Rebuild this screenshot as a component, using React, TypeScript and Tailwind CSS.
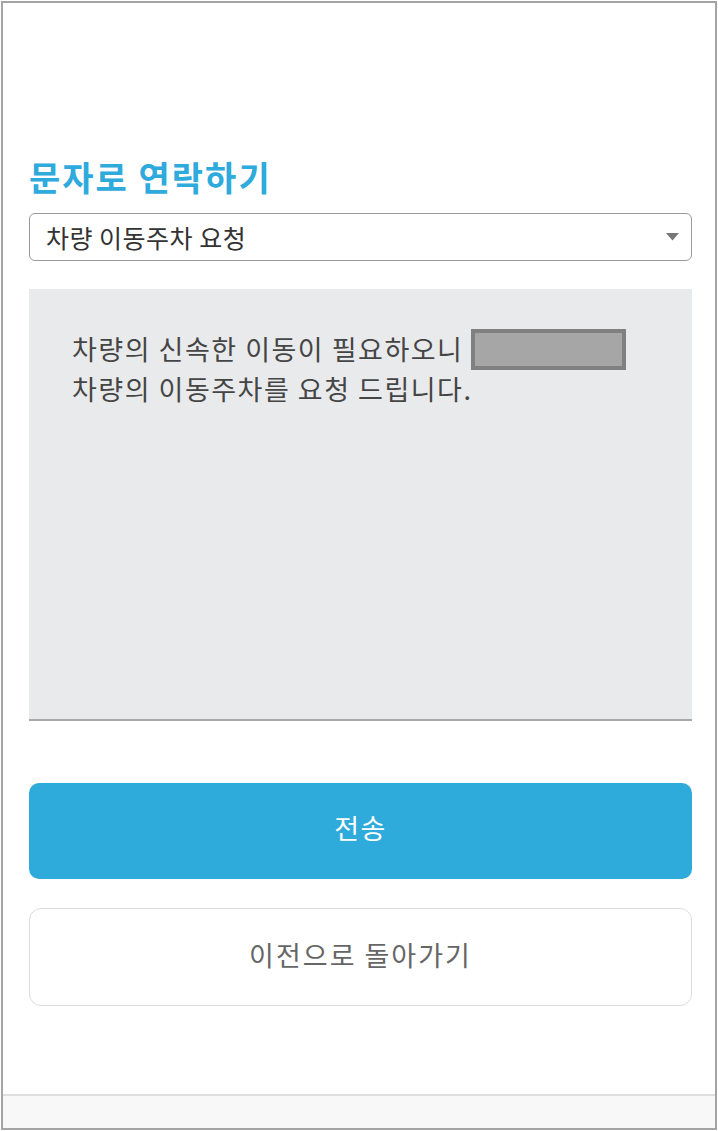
import React from "react";

const font = { fontFamily: '"Noto Sans CJK KR", "Noto Sans", sans-serif' };

function ChevronDown() {
  return (
    <svg width="13" height="8" viewBox="0 0 13 8" className="shrink-0">
      <polygon points="0,0 13,0 6.5,7.5" fill="#777777" />
    </svg>
  );
}

export default function App() {
  return (
    <div className="w-[718px] h-[1131px] bg-white p-px" style={font}>
      <div className="h-[1129px] border-2 border-[#a4a4a4] bg-white flex flex-col">
        <div className="flex-1 flex flex-col pl-[26px] pr-[23px] pt-[154px]">
          <h1 className="text-[34px] leading-[40px] font-bold text-[#2eaadc] tracking-[2px]">
            문자로 연락하기
          </h1>

          <div className="mt-[16px] h-[48px] rounded-[6px] border border-[#9a9a9a] flex items-center justify-between pl-[16px] pr-[12px]">
            <span className="text-[25px] text-[#333333] leading-none tracking-[0.5px]">차량 이동주차 요청</span>
            <ChevronDown />
          </div>

          <div className="mt-[28px] h-[432px] bg-[#e9eaec] border-b-2 border-[#a8a8a8] pt-[40px] pl-[43px] pr-[20px]">
            <p className="text-[27px] leading-[40px] text-[#454545] tracking-[1.5px]">
              차량의 신속한 이동이 필요하오니{" "}
              <span className="inline-block align-middle w-[155px] h-[41px] -mt-[7px] -mb-[1px] bg-[#a6a6a6] border-4 border-[#808080]" />
              <br />
              차량의 이동주차를 요청 드립니다.
            </p>
          </div>

          <button className="mt-[62px] h-[96px] w-full rounded-[10px] bg-[#2eaadb] text-white text-[27px] tracking-[1.5px] pb-[5px]">
            전송
          </button>

          <button className="mt-[29px] h-[98px] w-full rounded-[12px] border border-[#dcdcdc] bg-white text-[#666666] text-[27px] tracking-[2px] pb-[3px]">
            이전으로 돌아가기
          </button>
        </div>

        <div className="h-[34px] border-t-2 border-[#dedede] bg-[#f8f8f8]" />
      </div>
    </div>
  );
}
